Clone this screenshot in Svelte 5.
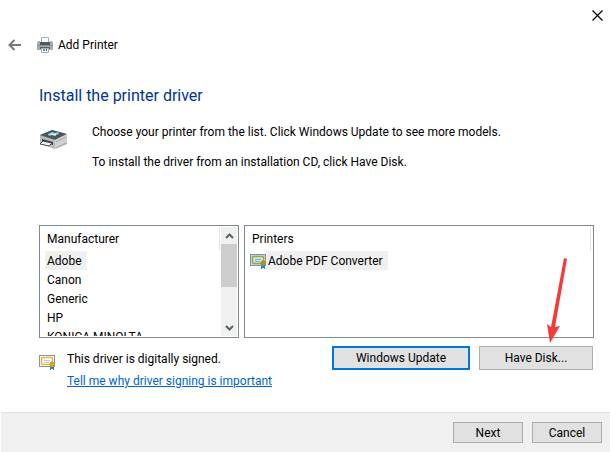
<script>
	const manufacturers = ['Adobe', 'Canon', 'Generic', 'HP', 'KONICA MINOLTA'];
	const printers = ['Adobe PDF Converter'];

	let manufacturer = $state('Adobe');
	let printer = $state('Adobe PDF Converter');
	let list;

	function scrollList(amount) {
		list.scrollTop += amount;
	}
</script>

{#snippet certificate(tint)}
	<svg class="certificate" width="16" height="16" viewBox="0 0 16 16" aria-hidden="true">
		<rect x="0.5" y="1.5" width="15" height="11" fill={tint ? '#b5dce8' : '#fff'} stroke="#8794a0" />
		<rect x="2.5" y="3.5" width="11" height="7" rx="1" fill={tint ? '#c4e6ee' : '#fff'} stroke={tint ? '#a9a33c' : '#e8b63a'} stroke-width="1.5" />
		<path d="M5 6.500h6M5 8.500h5" stroke={tint ? '#7ab5c0' : '#c2c8d2'} />
		<path d="M11 12h4v4h-1v-1h-2v1h-1z" fill="#1684d8" />
		<path d="M13 7l1 1h1v1l1 1.500-1 1v1h-1l-1 1-1-1h-1v-1l-1-1 1-1.500v-1h1z" fill={tint ? '#a99227' : '#dfa514'} />
	</svg>
{/snippet}

<main class="wizard">
	<div class="titlebar">
		<button class="close" aria-label="Close">
			<svg width="11" height="11" viewBox="0 0 11 11"><path d="M0.500 0.500l10 10M10.500 0.500l-10 10" stroke="#000" stroke-width="1.200" /></svg>
		</button>
	</div>

	<header class="title">
		<button class="back" aria-label="Back">
			<svg width="13" height="12" viewBox="0 0 13 12"><path d="M6.500 1L1.500 6l5 5M1.500 6H13" fill="none" stroke="#737b7b" stroke-width="2" /></svg>
		</button>
		<svg width="16" height="16" viewBox="0 0 16 16" aria-hidden="true">
			<path d="M4.500 0.500h7v5h-7z" fill="#fff" stroke="#a5adb1" />
			<path d="M1 4h2v2h10V4h2l1 2v7H0V6z" fill="#a4acae" />
			<path d="M3 5h10v3H3z" fill="#50585b" />
			<path d="M0 8h16v1H0z" fill="#858e91" />
			<path d="M3 10h10v2H3z" fill="#596266" />
			<path d="M4.500 11.500h7v4h-7z" fill="#fff" stroke="#a3b6c0" />
			<path d="M6 12h2v2H6z" fill="#4c9ecb" />
			<path d="M9 12h1v2H9z" fill="#1764a8" />
		</svg>
		<span>Add Printer</span>
	</header>

	<section class="page">
		<h1>Install the printer driver</h1>

		<div class="intro">
			<svg width="29" height="20" viewBox="0 0 29 20" aria-hidden="true">
				<path d="M1 5L13 0l15 4v10l-12 5L1 13z" fill="#a9adae" />
				<path d="M1 5L13 0l15 4-12 6z" fill="#4c5558" />
				<path d="M16 10l12-6v9l-12 6z" fill="#d0d2d2" />
				<path d="M1 6l15 4v9L1 13z" fill="#b9bcbd" />
				<path d="M3 9l11 3v3L3 12z" fill="#34393d" />
				<path d="M4 11l9 2-3 3-9-2z" fill="#f4f4f4" stroke="#42484b" />
				<path d="M9 4l4-2 3 1 3-1 1 2-3 1v1l-4-1-3 1z" fill="#8ed4e9" />
				<path d="M12 4l3 1 2-1" stroke="#fff" fill="none" />
				<path d="M17 12l10-5M17 18l10-5" stroke="#a3a8aa" />
			</svg>
			<div>
				<p>Choose your printer from the list. Click Windows Update to see more models.</p>
				<p>To install the driver from an installation CD, click Have Disk.</p>
			</div>
		</div>

		<div class="lists">
			<div class="box manufacturers">
				<div class="column" bind:this={list}>
					<h2 id="manufacturer-label">Manufacturer</h2>
					<ul aria-labelledby="manufacturer-label">
						{#each manufacturers as name}
							<li>
								<button class="row" class:selected={manufacturer === name} onclick={() => (manufacturer = name)}>
									<span>{name}</span>
								</button>
							</li>
						{/each}
					</ul>
				</div>
				<div class="scrollbar">
					<button aria-label="Scroll up" onclick={() => scrollList(-19)}>
						<svg width="9" height="6" viewBox="0 0 9 6"><path d="M1 5l3.500-3.500L8 5" fill="none" stroke="#56645f" stroke-width="2" /></svg>
					</button>
					<div class="track"><div class="thumb"></div></div>
					<button aria-label="Scroll down" onclick={() => scrollList(19)}>
						<svg width="9" height="6" viewBox="0 0 9 6"><path d="M1 1l3.500 3.500L8 1" fill="none" stroke="#56645f" stroke-width="2" /></svg>
					</button>
				</div>
			</div>

			<div class="box printers">
				<div class="column">
					<h2 id="printer-label">Printers</h2>
					<ul aria-labelledby="printer-label">
						{#each printers as name}
							<li>
								<button class="row" class:selected={printer === name} onclick={() => (printer = name)}>
									{@render certificate(true)}
									<span>{name}</span>
								</button>
							</li>
						{/each}
					</ul>
				</div>
			</div>
		</div>

		<div class="signing">
			{@render certificate(false)}
			<div class="signed">
				<p>This driver is digitally signed.</p>
				<a href="#signing">Tell me why driver signing is important</a>
			</div>
			<div class="actions">
				<button class="button update">Windows Update</button>
				<button class="button disk">Have Disk...</button>
				<svg class="pointer" width="20" height="86" viewBox="0 0 20 86" aria-hidden="true">
					<path d="M17 0l3 1-12 68 5-1L3 85 0 66l4 3z" fill="#f43b3b" />
				</svg>
			</div>
		</div>
	</section>

	<footer>
		<button class="button">Next</button>
		<button class="button">Cancel</button>
	</footer>
</main>

<style>
	:global(body) {
		margin: 0;
		background: #fff;
	}

	.wizard {
		display: flex;
		flex-direction: column;
		min-height: 100vh;
		font: 12px/18px Roboto, 'Noto Sans', sans-serif;
		color: #000;
	}

	h1,
	h2,
	p,
	ul {
		margin: 0;
		padding: 0;
		font-weight: normal;
	}

	ul {
		list-style: none;
	}

	svg {
		display: block;
		flex: none;
	}

	button {
		margin: 0;
		padding: 0;
		border: 0;
		background: none;
		font: inherit;
		color: inherit;
	}

	.titlebar {
		display: flex;
		justify-content: flex-end;
		height: 30px;
		padding-right: 7px;
	}

	.close {
		display: flex;
		width: 11px;
		height: 30px;
		align-items: center;
	}

	.title {
		display: flex;
		align-items: center;
		height: 30px;
		padding-left: 8px;
	}

	.back {
		margin-right: 16px;
	}

	.title span {
		margin-left: 5px;
	}

	.page {
		flex: 1;
		padding: 24px 16px 16px 39px;
	}

	h1 {
		font-size: 16px;
		line-height: 24px;
		color: #003399;
	}

	.intro {
		display: flex;
		gap: 24px;
		padding-top: 15px;
	}

	.intro > svg {
		margin-top: 7px;
	}

	.intro p {
		margin-bottom: 12px;
	}

	.lists {
		display: flex;
		gap: 5px;
		margin-top: 42px;
	}

	.box {
		display: flex;
		box-sizing: border-box;
		height: 113px;
		padding: 1px;
		border: 1px solid #828790;
	}

	.manufacturers {
		width: 200px;
	}

	.printers {
		flex: 1;
	}

	.column {
		flex: 1;
		overflow: hidden;
	}

	h2 {
		height: 24px;
		margin-right: 1px;
		padding-left: 6px;
		border-right: 1px solid #e5e5e5;
		font-size: 12px;
		line-height: 24px;
	}

	.row {
		display: flex;
		align-items: center;
		height: 19px;
		padding-left: 4px;
	}

	.row span {
		padding: 2px 5px 0 2px;
		line-height: 17px;
	}

	.row.selected span {
		background: #f0f0f0;
	}

	.scrollbar {
		display: flex;
		flex-direction: column;
		width: 16px;
		background: #f0f0f0;
	}

	.scrollbar button {
		display: flex;
		align-items: center;
		justify-content: center;
		height: 17px;
	}

	.track {
		flex: 1;
	}

	.thumb {
		height: 43px;
		background: #cdcdcd;
	}

	.signing {
		display: flex;
		padding-top: 8px;
	}

	.signing > .certificate {
		margin-top: 8px;
	}

	.signed {
		flex: 1;
		margin-left: 12px;
		padding-top: 4px;
		line-height: 18px;
	}

	.signed a {
		display: inline-block;
		margin-top: 4px;
		color: #0066cc;
		white-space: nowrap;
	}

	.actions {
		position: relative;
		display: flex;
		gap: 9px;
		height: 24px;
		margin-right: 1px;
	}

	.pointer {
		position: absolute;
		right: 26px;
		bottom: 26px;
	}

	.button {
		box-sizing: border-box;
		width: 70px;
		height: 21px;
		border: 1px solid #adadad;
		background: #e1e1e1;
		line-height: 16px;
	}

	.update {
		width: 138px;
		height: 24px;
		border: 2px solid #0078d7;
	}

	.disk {
		width: 114px;
		height: 24px;
	}

	footer {
		display: flex;
		justify-content: flex-end;
		gap: 9px;
		margin-left: 1px;
		padding: 9px 8px;
		border-top: 1px solid #dfdfdf;
		background: #f0f0f0;
	}
</style>
